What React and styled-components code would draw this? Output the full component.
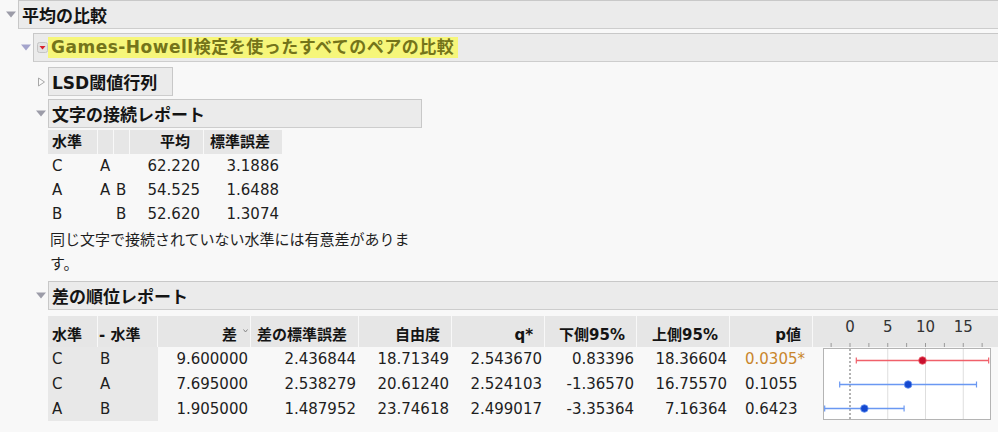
import React from "react";
import styled, { createGlobalStyle } from "styled-components";

const GlobalStyle = createGlobalStyle`
  body {
    margin: 0;
    background: #f8f8f8;
    color: #1e1e1e;
    font-family: "DejaVu Sans", "Noto Sans CJK JP", sans-serif;
    overflow: hidden;
  }
`;

const Page = styled.div`
  width: 1120px;
  padding-left: 4px;
`;

const HeadRow = styled.div`
  display: flex;
  align-items: center;
  height: 29px;
`;

const Toggle = styled.span`
  flex: 0 0 14px;
  display: flex;
  justify-content: center;
  align-items: center;
`;

const HeadBox = styled.div`
  box-sizing: border-box;
  height: 29px;
  ${(p) => (p.$width ? `width: ${p.$width}px;` : "flex: 1;")}
  border: 1px solid #c8c8c8;
  border-bottom-color: #cdcdcd;
  background: #ebebeb;
  display: flex;
  align-items: center;
  padding: 0 3px;
  font-size: 17px;
  font-weight: bold;
  color: #141414;
  white-space: nowrap;
`;

const Highlight = styled.span`
  display: inline-block;
  padding: 0 4px 0 3px;
  line-height: 21px;
  letter-spacing: 0.5px;
  background: #f6f67a;
  color: #74741a;
`;

const Body = styled.div`
  padding-left: ${(p) => p.$indent}px;
  margin-top: ${(p) => p.$top}px;
`;

const Gap = styled.div`
  height: ${(p) => p.$h}px;
`;

const Table = styled.table`
  border-collapse: separate;
  border-spacing: 0;
  table-layout: fixed;
  font-size: 15px;
`;

const Th = styled.th`
  box-sizing: border-box;
  width: ${(p) => p.$w}px;
  height: ${(p) => p.$h}px;
  background: #e6e6e6;
  border-right: 1px solid #f8f8f8;
  font-weight: bold;
  text-align: ${(p) => p.$align || "right"};
  vertical-align: bottom;
  padding: 0 ${(p) => p.$pr ?? 11}px ${(p) => p.$pb ?? 3}px ${(p) => p.$pl ?? 3}px;
  white-space: nowrap;
  color: #141414;
`;

const Td = styled.td`
  box-sizing: border-box;
  height: 24px;
  padding: 0 ${(p) => p.$pr ?? 3}px 0 ${(p) => p.$pl ?? 3}px;
  text-align: ${(p) => p.$align || "right"};
  background: ${(p) => (p.$shade ? "#e8e8e8" : "transparent")};
  color: ${(p) => (p.$sig ? "#c9862c" : "#1e1e1e")};
  white-space: nowrap;
  line-height: 24px;
`;

const ChartTd = styled.td`
  padding: 0;
  vertical-align: top;
`;

const Footnote = styled.p`
  box-sizing: border-box;
  width: 374px;
  margin: 2px 0 0;
  padding-left: 2px;
  font-size: 15px;
  line-height: 24px;
  color: #1e1e1e;
`;

const SortMark = styled.svg`
  margin-left: 6px;
  vertical-align: 7px;
`;

const DownTri = ({ color }) => (
  <svg width="10" height="7" viewBox="0 0 10 7">
    <path d="M0 0.5 L10 0.5 L5 6.5 Z" fill={color} />
  </svg>
);

const RightTri = () => (
  <svg width="9" height="10" viewBox="0 0 9 10">
    <path d="M1.5 1 L7.5 5 L1.5 9 Z" fill="#fafafa" stroke="#a8a8a8" />
  </svg>
);

const MenuIcon = () => (
  <svg width="11" height="11" viewBox="0 0 11 11">
    <rect x="0.5" y="0.5" width="10" height="10" rx="2" fill="#e2e2e2" stroke="#c4c4c4" />
    <path d="M2.5 4 L8.5 4 L5.5 7.5 Z" fill="#d8202c" />
  </svg>
);

const X0 = 37;
const K = 7.55;
const xv = (v) => X0 + v * K;

const ChartHead = () => (
  <svg width="190" height="31" style={{ display: "block" }}>
    {[0, 5, 10, 15].map((v) => (
      <text
        key={v}
        x={xv(v)}
        y="16"
        textAnchor="middle"
        fontSize="15"
        fontWeight="normal"
        fontFamily="DejaVu Sans, sans-serif"
        fill="#333"
      >
        {v}
      </text>
    ))}
    {[-2.5, 0, 2.5, 5, 7.5, 10, 12.5, 15, 17.5].map((v) => (
      <line key={v} x1={xv(v)} x2={xv(v)} y1="27" y2="31" stroke="#9a9a9a" />
    ))}
  </svg>
);

const rows2 = [
  { l: "C", m: "B", d: 9.6, ds: "9.600000", se: "2.436844", df: "18.71349", q: "2.543670", lo: 0.83396, los: "0.83396", hi: 18.36604, his: "18.36604", p: "0.0305*", sig: true },
  { l: "C", m: "A", d: 7.695, ds: "7.695000", se: "2.538279", df: "20.61240", q: "2.524103", lo: -1.3657, los: "-1.36570", hi: 16.7557, his: "16.75570", p: "0.1055" },
  { l: "A", m: "B", d: 1.905, ds: "1.905000", se: "1.487952", df: "23.74618", q: "2.499017", lo: -3.35364, los: "-3.35364", hi: 7.16364, his: "7.16364", p: "0.6423" },
];

const ChartPlot = () => (
  <svg width="190" height="74" style={{ display: "block" }}>
    <rect x="10.5" y="1.5" width="167" height="71" fill="#ffffff" stroke="#b4b4b4" />
    {[5, 10, 15].map((v) => (
      <line key={v} x1={xv(v)} x2={xv(v)} y1="2" y2="72" stroke="#dedede" />
    ))}
    <line x1={xv(0)} x2={xv(0)} y1="2" y2="72" stroke="#666" strokeDasharray="2 2" />
    {rows2.map((r, i) => {
      const y = 13.5 + i * 24;
      const line = r.sig ? "#f0606a" : "#6a98f2";
      const dot = r.sig ? "#c8102e" : "#1448d0";
      const a = Math.max(xv(r.lo), 11);
      const b = Math.min(xv(r.hi), 177);
      return (
        <g key={i}>
          <line x1={a} x2={b} y1={y} y2={y} stroke={line} strokeWidth="1.4" />
          <line x1={a} x2={a} y1={y - 3} y2={y + 3} stroke={line} strokeWidth="1.2" />
          <line x1={b} x2={b} y1={y - 3} y2={y + 3} stroke={line} strokeWidth="1.2" />
          <circle cx={xv(r.d)} cy={y} r="3.8" fill={dot} stroke={line} strokeWidth="0.8" />
        </g>
      );
    })}
  </svg>
);

const rows1 = [
  { lvl: "C", a: "A", b: "", mean: "62.220", se: "3.1886" },
  { lvl: "A", a: "A", b: "B", mean: "54.525", se: "1.6488" },
  { lvl: "B", a: "", b: "B", mean: "52.620", se: "1.3074" },
];

const LetterReport = () => (
  <>
    <Table>
      <thead>
        <tr>
          <Th $w={50} $h={23} $align="left" $pl={4} $pr={0}>水準</Th>
          <Th $w={16} $h={23} />
          <Th $w={16} $h={23} />
          <Th $w={74} $h={23} $pr={13}>平均</Th>
          <Th $w={79} $h={23} $pr={12}>標準誤差</Th>
        </tr>
      </thead>
      <tbody>
        {rows1.map((r) => (
          <tr key={r.lvl}>
            <Td $align="left" $pl={4}>{r.lvl}</Td>
            <Td $align="left" $pl={2} $pr={0}>{r.a}</Td>
            <Td $align="left" $pl={2} $pr={0}>{r.b}</Td>
            <Td $pr={4}>{r.mean}</Td>
            <Td $pr={4}>{r.se}</Td>
          </tr>
        ))}
      </tbody>
    </Table>
    <Footnote>同じ文字で接続されていない水準には有意差があります。</Footnote>
  </>
);

const OrderedReport = () => (
  <Table>
    <thead>
      <tr>
        <Th $w={50} $h={31} $align="left" $pl={4} $pr={0}>水準</Th>
        <Th $w={60} $h={31} $align="left" $pl={1} $pr={0}>- 水準</Th>
        <Th $w={93} $h={31} $pr={2}>
          差
          <SortMark width="5" height="4" viewBox="0 0 5 4">
            <path d="M0.5 0.5 L2.5 3 L4.5 0.5" fill="none" stroke="#888" />
          </SortMark>
        </Th>
        <Th $w={108} $h={31}>差の標準誤差</Th>
        <Th $w={93} $h={31}>自由度</Th>
        <Th $w={93} $h={31}>q*</Th>
        <Th $w={92} $h={31}>下側95%</Th>
        <Th $w={93} $h={31}>上側95%</Th>
        <Th $w={83} $h={31}>p値</Th>
        <Th $w={190} $h={31} $pl={0} $pr={0} $pb={0}>
          <ChartHead />
        </Th>
      </tr>
    </thead>
    <tbody>
      {rows2.map((r, i) => (
        <tr key={i}>
          <Td $shade $align="left" $pl={4}>{r.l}</Td>
          <Td $shade $align="left" $pl={2}>{r.m}</Td>
          <Td>{r.ds}</Td>
          <Td>{r.se}</Td>
          <Td>{r.df}</Td>
          <Td>{r.q}</Td>
          <Td>{r.los}</Td>
          <Td>{r.his}</Td>
          <Td $align="left" $pl={15} $sig={r.sig}>{r.p}</Td>
          {i === 0 && (
            <ChartTd rowSpan={3}>
              <ChartPlot />
            </ChartTd>
          )}
        </tr>
      ))}
    </tbody>
  </Table>
);

export default function App() {
  return (
    <Page>
      <GlobalStyle />
      <HeadRow>
        <Toggle>
          <DownTri color="#9c9ca8" />
        </Toggle>
        <HeadBox>平均の比較</HeadBox>
      </HeadRow>
      <Body $indent={15} $top={4}>
        <HeadRow>
          <Toggle>
            <DownTri color="#a4a4cc" />
          </Toggle>
          <HeadBox>
            <MenuIcon />
            <Highlight>Games-Howell検定を使ったすべてのペアの比較</Highlight>
          </HeadBox>
        </HeadRow>
        <Body $indent={15} $top={5}>
          <HeadRow>
            <Toggle>
              <RightTri />
            </Toggle>
            <HeadBox $width={125}>LSD閾値行列</HeadBox>
          </HeadRow>
          <Gap $h={3} />
          <HeadRow>
            <Toggle>
              <DownTri color="#9c9ca8" />
            </Toggle>
            <HeadBox $width={374}>文字の接続レポート</HeadBox>
          </HeadRow>
          <Body $indent={14} $top={2}>
            <LetterReport />
          </Body>
          <Gap $h={5} />
          <HeadRow>
            <Toggle>
              <DownTri color="#9c9ca8" />
            </Toggle>
            <HeadBox>差の順位レポート</HeadBox>
          </HeadRow>
          <Body $indent={14} $top={6}>
            <OrderedReport />
          </Body>
        </Body>
      </Body>
    </Page>
  );
}
